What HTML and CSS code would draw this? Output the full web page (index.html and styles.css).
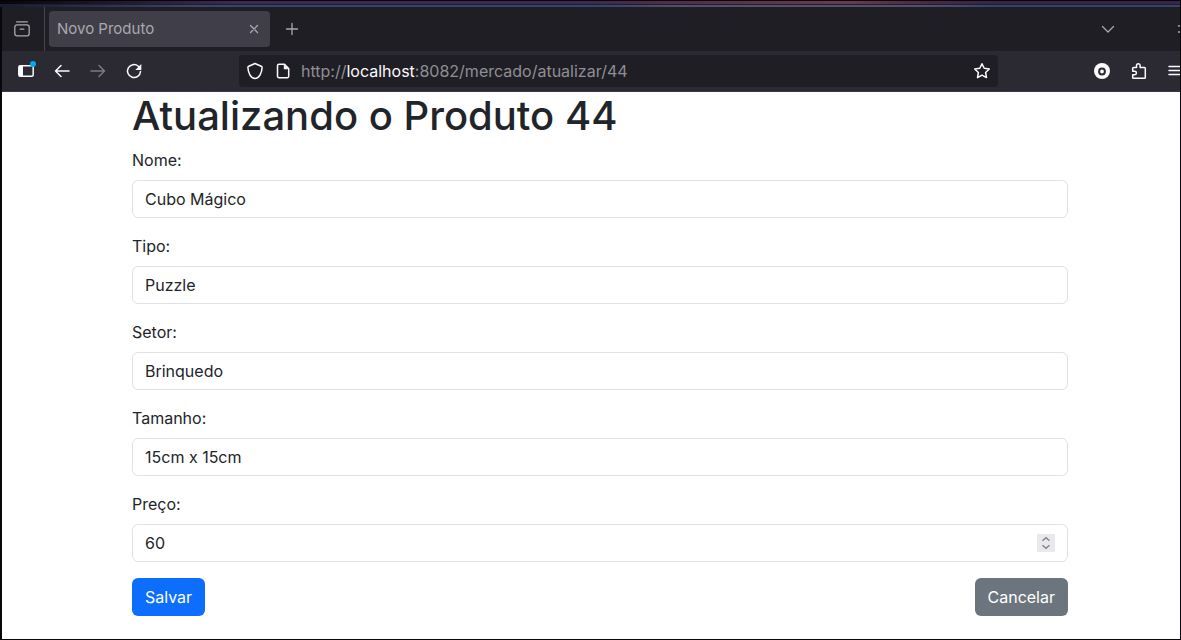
FILE: index.html
```html
<!DOCTYPE html>
<html lang="pt-BR">
<head>
<meta charset="utf-8">
<title>Novo Produto</title>
<link rel="stylesheet" href="styles.css">
</head>
<body>
<div class="desktop-strip"></div>
<div class="window">
  <header class="browser">
    <div class="tabbar">
      <button class="recent" type="button" aria-label="Abas recentes">
        <svg class="icon dim" width="18" height="18" viewBox="0 0 18 18"><path d="M3.600 1.800h10.800M4 4.900h10a2.200 2.200 0 0 1 2.200 2.200v6.500a2.200 2.200 0 0 1-2.200 2.200H4a2.200 2.200 0 0 1-2.200-2.200V7.100A2.200 2.200 0 0 1 4 4.900zM7.200 9.200h3.600"/></svg>
      </button>
      <div class="tab">
        <span class="tab-title">Novo Produto</span>
        <button type="button" aria-label="Fechar aba">
          <svg class="icon dim" width="10" height="10" viewBox="0 0 10 10"><path d="M1.500 1.500l7 7M8.500 1.500l-7 7"/></svg>
        </button>
      </div>
      <button class="new-tab" type="button" aria-label="Nova aba">
        <svg class="icon dim" width="14" height="14" viewBox="0 0 14 14"><path d="M7 1.500v11M1.500 7h11"/></svg>
      </button>
      <button class="all-tabs" type="button" aria-label="Listar abas">
        <svg class="icon dim" width="14" height="14" viewBox="0 0 14 14"><path d="M1.500 4.500l5.500 5.500 5.500-5.500"/></svg>
      </button>
      <span class="edge"></span>
    </div>
    <div class="toolbar">
      <div class="nav">
        <button class="sidebar" type="button" aria-label="Barra lateral">
          <svg class="icon" width="18" height="18" viewBox="0 0 18 18"><rect x="1.800" y="3.700" width="14.400" height="10.600" rx="1.500"/><path class="solid" d="M2 4h4v10H2z"/></svg>
          <span class="badge"></span>
        </button>
        <button type="button" aria-label="Voltar">
          <svg class="icon" width="18" height="18" viewBox="0 0 18 18"><path d="M16 9H2.500M8 3.500L2.500 9 8 14.500"/></svg>
        </button>
        <button type="button" aria-label="Avançar" disabled>
          <svg class="icon faded" width="18" height="18" viewBox="0 0 18 18"><path d="M2 9h13.500M10 3.500L15.500 9 10 14.500"/></svg>
        </button>
        <button type="button" aria-label="Recarregar">
          <svg class="icon" width="18" height="18" viewBox="0 0 18 18"><path d="M15.500 9.500a6.500 6.500 0 1 1-2.200-5.300l2 1.800"/><path class="solid" d="M16.300 2v6h-6z"/></svg>
        </button>
      </div>
      <div class="urlbar">
        <svg class="icon" width="18" height="18" viewBox="0 0 18 18"><path d="M9 1.500l6.200 2.700c.6.300.9.800.9 1.400C16 10.500 13.300 16.300 9 16.500 4.700 16.300 2 10.500 1.900 5.600c0-.6.300-1.100.9-1.400z"/></svg>
        <svg class="icon page-icon" width="18" height="18" viewBox="0 0 18 18"><path d="M5 2.300h5.500l4.200 4.200v7.700a1.500 1.500 0 0 1-1.500 1.500H5a1.500 1.500 0 0 1-1.500-1.500V3.800A1.500 1.500 0 0 1 5 2.300z"/><path class="solid" d="M9.800 2.300l4.900 4.900H9.800z"/></svg>
        <span class="url">http://<b>localhost</b>:8082/mercado/atualizar/44</span>
        <button type="button" aria-label="Adicionar aos favoritos">
          <svg class="icon" width="18" height="18" viewBox="0 0 18 18"><path d="M9 1.700l2.200 4.600 5.100.7-3.700 3.500.9 5.100L9 13.200l-4.500 2.400.9-5.100L1.700 7l5.100-.7z"/></svg>
        </button>
      </div>
      <div class="tools">
        <button type="button" aria-label="Conta">
          <svg class="disc" width="18" height="18" viewBox="0 0 18 18"><circle cx="9" cy="9" r="8"/><circle class="hole" cx="9" cy="9.500" r="2.900"/></svg>
        </button>
        <button type="button" aria-label="Extensões">
          <svg class="icon" width="18" height="18" viewBox="0 0 18 18"><path d="M3.500 5.500h3V3.600a1.800 1.800 0 0 1 3.600 0v1.900h4.400a.8.800 0 0 1 .8.800v9.100a.8.800 0 0 1-.8.800H3.500a.8.800 0 0 1-.8-.8v-2.700h2a1.700 1.700 0 0 0 0-3.400h-2V6.300a.8.800 0 0 1 .8-.8z"/></svg>
        </button>
        <button type="button" aria-label="Menu">
          <svg class="icon" width="18" height="18" viewBox="0 0 18 18"><path d="M2 4.500h14M2 8.500h14M2 12.500h14"/></svg>
        </button>
      </div>
    </div>
  </header>
  <main class="page">
    <h1>Atualizando o Produto 44</h1>
    <form>
      <div class="field"><label for="nome">Nome:</label><input id="nome" type="text" value="Cubo Mágico"></div>
      <div class="field"><label for="tipo">Tipo:</label><input id="tipo" type="text" value="Puzzle"></div>
      <div class="field"><label for="setor">Setor:</label><input id="setor" type="text" value="Brinquedo"></div>
      <div class="field"><label for="tamanho">Tamanho:</label><input id="tamanho" type="text" value="15cm x 15cm"></div>
      <div class="field">
        <label for="preco">Preço:</label>
        <div class="number">
          <input id="preco" type="number" value="60">
          <span class="spinner"><svg width="18" height="18" viewBox="0 0 18 18"><path d="M5.500 6.800L9 3.800l3.500 3M5.500 11.200l3.500 3 3.500-3"/></svg></span>
        </div>
      </div>
      <div class="actions">
        <button class="btn save" type="submit">Salvar</button>
        <a class="btn cancel" href="#">Cancelar</a>
      </div>
    </form>
  </main>
</div>
</body>
</html>
```

FILE: styles.css
```css
* { box-sizing: border-box; }

body {
  margin: 0;
  min-height: 100vh;
  display: flex;
  flex-direction: column;
  background: #08080c;
  font-family: Inter, "Liberation Sans", sans-serif;
  font-size: 16px;
  line-height: 24px;
  color: #212529;
}

button {
  padding: 0;
  border: 0;
  background: none;
  color: inherit;
  font: inherit;
}

svg { display: block; }

.desktop-strip {
  height: 7px;
  border-top: 1px solid #050308;
  border-right: 1px solid #050308;
  background:
    linear-gradient(#221c2e, #221c2e) 0 3px / 100% 1px no-repeat,
    linear-gradient(90deg, #10202e, #39446e 16%, #36446f 52%, #525068 57%, #56506a 78%, #34446c 84%) 0 4px / 100% 2px no-repeat,
    linear-gradient(90deg, #08060c, #3c2a50 20%, #3c2a50 50%, #4b2a48 54%, #6a3b4e 72%, #4b2a44 78%, #382448 84%);
}

.window {
  flex: 1;
  display: flex;
  flex-direction: column;
  margin: 0 1px 1px 2px;
  overflow: hidden;
  background: #fff;
}

.browser { color: #fbfbfe; }

.tabbar {
  display: flex;
  align-items: center;
  height: 44px;
  background: #1f1e25;
}

.recent {
  display: grid;
  place-items: center;
  width: 43px;
  height: 44px;
  padding-right: 3px;
  border-right: 1px solid #46454d;
}

.tab {
  display: flex;
  align-items: center;
  justify-content: space-between;
  width: 221px;
  height: 36px;
  margin-left: 4px;
  padding: 0 11px 0 8px;
  border-radius: 4px;
  background: #403e49;
  color: #a9a8ae;
  font-size: 15px;
}

.new-tab { margin-left: 15px; }
.all-tabs { margin-left: auto; }

.edge {
  width: 2px;
  height: 8px;
  margin-left: 63px;
  border-top: 2px solid #85848a;
  border-bottom: 2px solid #85848a;
}

.toolbar {
  display: flex;
  align-items: center;
  height: 41px;
  border-bottom: 1px solid #3b3943;
  background: #2b2a33;
}

.nav {
  display: flex;
  gap: 18px;
  padding-left: 15px;
}

.sidebar { position: relative; }

.badge {
  position: absolute;
  top: -1px;
  right: -1px;
  width: 6px;
  height: 6px;
  border-radius: 50%;
  background: #00a8f5;
}

.urlbar {
  flex: 1;
  display: flex;
  align-items: center;
  height: 32px;
  margin-left: 96px;
  padding: 0 7px;
  border-radius: 4px;
  background: #1f1e25;
}

.page-icon { margin-left: 10px; }

.url {
  flex: 1;
  margin-left: 9px;
  color: #8f8e94;
}

.url b {
  color: #fbfbfe;
  font-weight: 400;
}

.tools {
  display: flex;
  gap: 19px;
  margin: 0 -5px 0 95px;
}

.icon {
  fill: none;
  stroke: #fbfbfe;
  stroke-width: 1.5;
  stroke-linecap: round;
  stroke-linejoin: round;
}

.icon .solid {
  fill: #fbfbfe;
  stroke: none;
}

.dim {
  stroke: #a9a8ae;
  stroke-width: 1.3;
}

.faded { stroke: #7b7a82; }
.disc { fill: #fbfbfe; }

.hole {
  fill: #fbfbfe;
  stroke: #2b2a33;
  stroke-width: 2;
}

.page { padding: 0 112px 23px 130px; }

h1 {
  margin: 0 0 8px;
  font-size: 40px;
  font-weight: 500;
  line-height: 48px;
}

.field { margin-bottom: 16px; }

label {
  display: block;
  width: fit-content;
  margin-bottom: 8px;
}

input {
  display: block;
  width: 100%;
  height: 38px;
  padding: 6px 12px;
  border: 1px solid #dee2e6;
  border-radius: 6px;
  background: #fff;
  color: inherit;
  font: inherit;
  appearance: none;
}

input[type="number"] { appearance: textfield; }

input::-webkit-inner-spin-button { appearance: none; }

.number { position: relative; }

.spinner {
  position: absolute;
  top: 10px;
  right: 13px;
  background: #e9e9ed;
  fill: none;
  stroke: #85848c;
  stroke-width: 1.5;
}

.actions {
  display: flex;
  justify-content: space-between;
}

.btn {
  padding: 7px 13px;
  border-radius: 6px;
  color: #fff;
  text-decoration: none;
}

.save { background: #0d6efd; }
.cancel { background: #6c757d; }
```
